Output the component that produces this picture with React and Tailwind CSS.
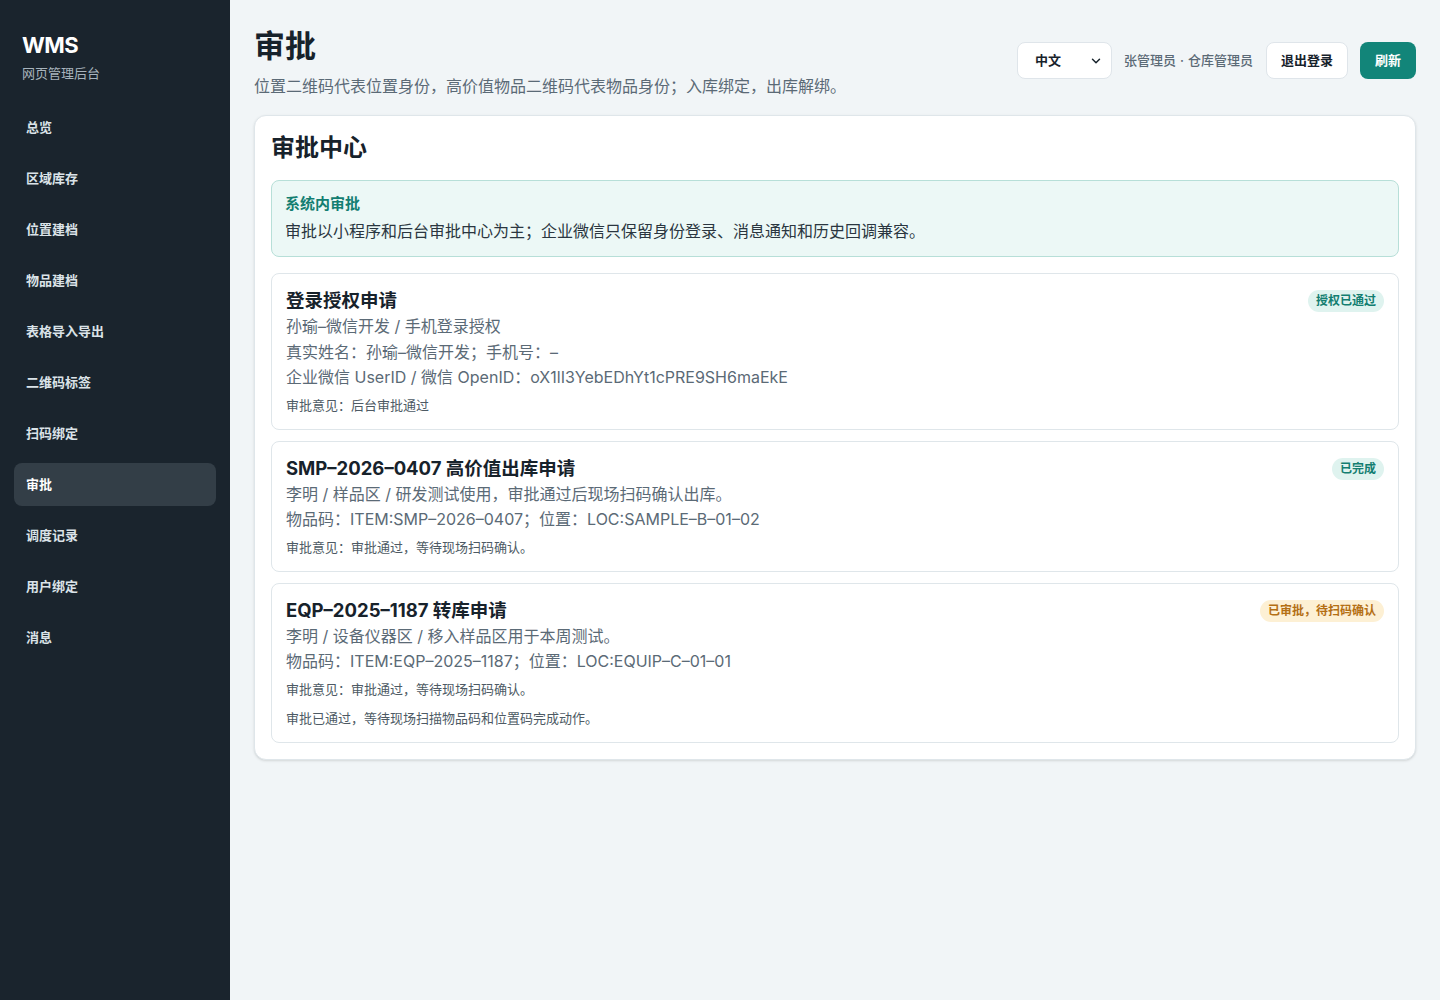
import { ChevronDown } from 'lucide-react';

const nav = ['总览', '区域库存', '位置建档', '物品建档', '表格导入导出', '二维码标签', '扫码绑定', '审批', '调度记录', '用户绑定', '消息'];

const requests = [
  {
    title: '登录授权申请',
    badge: '授权已通过',
    tone: 'teal',
    lines: ['孙瑜–微信开发 / 手机登录授权', '真实姓名：孙瑜–微信开发；手机号：–', '企业微信 UserID / 微信 OpenID：oX1lI3YebEDhYt1cPRE9SH6maEkE'],
    notes: ['审批意见：后台审批通过'],
  },
  {
    title: 'SMP–2026–0407 高价值出库申请',
    badge: '已完成',
    tone: 'teal',
    lines: ['李明 / 样品区 / 研发测试使用，审批通过后现场扫码确认出库。', '物品码：ITEM:SMP–2026–0407；位置：LOC:SAMPLE–B–01–02'],
    notes: ['审批意见：审批通过，等待现场扫码确认。'],
  },
  {
    title: 'EQP–2025–1187 转库申请',
    badge: '已审批，待扫码确认',
    tone: 'amber',
    lines: ['李明 / 设备仪器区 / 移入样品区用于本周测试。', '物品码：ITEM:EQP–2025–1187；位置：LOC:EQUIP–C–01–01'],
    notes: ['审批意见：审批通过，等待现场扫码确认。', '审批已通过，等待现场扫描物品码和位置码完成动作。'],
  },
];

export default function App() {
  return (
    <div className="flex min-h-[1000px] w-[1440px] font-['Inter','Noto_Sans_CJK_SC',sans-serif] text-[#17222b]">
      <aside className="w-[230px] shrink-0 bg-[#1a242d] px-[14px] pt-[32px]">
        <div className="px-2 text-[22px] font-bold leading-[26px] tracking-tight text-white">WMS</div>
        <div className="mt-[6px] px-2 text-[13px] leading-[18px] text-[#a8b4bd]">网页管理后台</div>
        <nav className="mt-[24px] flex flex-col gap-[8px]">
          {nav.map(n => (
            <div key={n}
              className={`h-[43px] rounded-lg px-3 flex items-center text-[13px] font-bold ${n === '审批' ? 'bg-[#333e47] text-white' : 'text-[#dbe3e8]'}`}>
              {n}
            </div>
          ))}
        </nav>
      </aside>

      <main className="flex-1 bg-[#f1f5f7] px-[24px] pt-[26px]">
        <div className="flex items-start justify-between">
          <div>
            <h1 className="text-[31px] font-bold leading-[40px]">审批</h1>
            <p className="mt-[9px] text-[16px] leading-[22px] text-[#5b6a76]">位置二维码代表位置身份，高价值物品二维码代表物品身份；入库绑定，出库解绑。</p>
          </div>
          <div className="mt-[16px] flex items-center">
            <div className="flex h-[37px] w-[95px] items-center justify-between rounded-lg border border-[#dfe5ea] bg-white pl-[17px] pr-[8px] text-[13px] font-bold">
              中文
              <ChevronDown size={14} strokeWidth={2.5} />
            </div>
            <div className="ml-[12px] flex items-center text-[13px] font-medium text-[#5b6a76]">
              <span>张管理员</span>
              <span className="mx-[4px]">·</span>
              <span>仓库管理员</span>
            </div>
            <button className="ml-[13px] h-[37px] rounded-lg border border-[#dfe5ea] bg-white px-[14px] text-[13px] font-bold">退出登录</button>
            <button className="ml-[12px] h-[37px] rounded-lg bg-[#128579] px-[15px] text-[13px] font-bold text-white">刷新</button>
          </div>
        </div>

        <section className="mt-[18px] rounded-xl border border-[#dfe6ea] bg-white px-[16px] pt-[16px] pb-[16px] shadow-sm">
          <h2 className="text-[24px] font-bold leading-[32px]">审批中心</h2>
          <div className="mt-[16px] rounded-lg border border-[#b7dfd8] bg-[#ecf8f6] px-[13px] pt-[12px] pb-[13px]">
            <div className="text-[15px] font-bold leading-[22px] text-[#137e71]">系统内审批</div>
            <div className="mt-[4px] text-[16px] leading-[24px] text-[#2a3640]">审批以小程序和后台审批中心为主；企业微信只保留身份登录、消息通知和历史回调兼容。</div>
          </div>

          <div className="mt-[16px] flex flex-col gap-[11px]">
            {requests.map(r => (
              <div key={r.title} className="rounded-lg border border-[#dfe6ea] bg-white px-[14px] pt-[15px] pb-[13px]">
                <div className="flex items-start justify-between">
                  <div className="text-[18.5px] font-bold leading-[22px] text-[#17222b]">{r.title}</div>
                  <span className={`mt-[1px] rounded-full px-[8px] py-[3px] text-[12px] font-bold leading-[16px] ${r.tone === 'teal' ? 'bg-[#dff3ef] text-[#137e71]' : 'bg-[#fdf0d4] text-[#b46f14]'}`}>{r.badge}</span>
                </div>
                <div className="mt-[2px] flex flex-col">
                  {r.lines.map(l => (
                    <div key={l} className="text-[16px] leading-[25.5px] text-[#5b6a76]">{l}</div>
                  ))}
                </div>
                <div className="mt-[4px] flex flex-col gap-[8px]">
                  {r.notes.map(n => (
                    <div key={n} className="text-[13px] leading-[21px] text-[#4d5a64]">{n}</div>
                  ))}
                </div>
              </div>
            ))}
          </div>
        </section>
      </main>
    </div>
  );
}
